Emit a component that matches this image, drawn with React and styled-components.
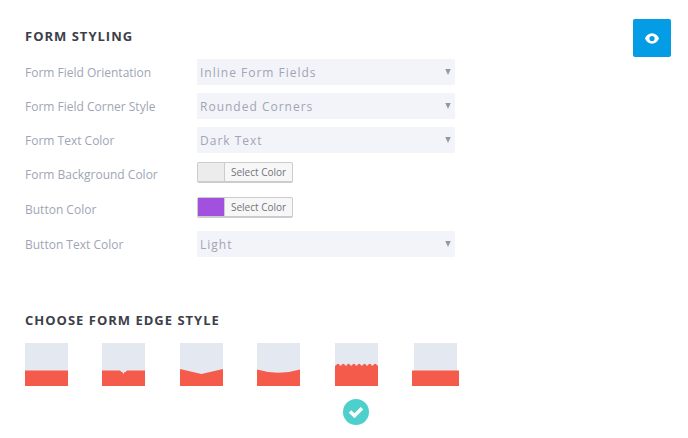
import React, { useState } from "react";
import styled, { createGlobalStyle } from "styled-components";

const GlobalStyle = createGlobalStyle`
  * {
    box-sizing: border-box;
  }

  body {
    margin: 0;
    background: #fff;
    font-family: "Open Sans", "Noto Sans", sans-serif;
  }
`;

const FIELDS = [
  {
    id: "orientation",
    label: "Form Field Orientation",
    options: ["Inline Form Fields", "Stacked Form Fields"],
  },
  {
    id: "corners",
    label: "Form Field Corner Style",
    options: ["Rounded Corners", "Square Corners"],
  },
  {
    id: "text-color",
    label: "Form Text Color",
    options: ["Dark Text", "Light Text"],
  },
  { id: "background", label: "Form Background Color", color: "#ececec" },
  { id: "button-color", label: "Button Color", color: "#a250de" },
  {
    id: "button-text",
    label: "Button Text Color",
    options: ["Light", "Dark"],
  },
];

// "shape" is the red lower part, drawn over a 43px tile
const EDGES = [
  { id: "straight", shape: "M0 27.5H43V43H0Z" },
  {
    id: "notch",
    shape: "M0 27.5H18L19.5 29L20.5 29.3L21.5 31L22.5 29.3L23.5 29L25 27.5H43V43H0Z",
  },
  { id: "angle", shape: "M0 26L21.5 31L43 26V43H0Z" },
  { id: "curve", shape: "M0 26.5Q21.5 33 43 26.5V43H0Z" },
  {
    id: "zigzag",
    shape:
      "M0 23L2 21.3Q3 20 4 21.3L5.5 23L7.3 21.3Q8.3 20 9.3 21.3L10.8 23L12.6 21.3Q13.6 20 14.6 21.3L16.1 23L17.9 21.3Q18.9 20 19.9 21.3L21.4 23L23.2 21.3Q24.2 20 25.2 21.3L26.7 23L28.5 21.3Q29.5 20 30.5 21.3L32 23L33.8 21.3Q34.8 20 35.8 21.3L37.3 23L39.1 21.3Q40.1 20 41.1 21.3L43 23V43H0Z",
  },
  { id: "overhang", shape: "M0 27.5H47V43H0Z", wide: true },
];

const App = () => {
  const [edge, setEdge] = useState("zigzag");

  return (
    <>
      <GlobalStyle />
      <Page>
        <Settings>
          <Section>
            <Title>Form Styling</Title>
            <Fields>
              {FIELDS.map((field) =>
                field.color ? (
                  <Row key={field.id} $tall>
                    <Label htmlFor={field.id}>{field.label}</Label>
                    <ColorButton id={field.id} type="button">
                      <Swatch $color={field.color} />
                      <ColorText>Select Color</ColorText>
                    </ColorButton>
                  </Row>
                ) : (
                  <Row key={field.id}>
                    <Label htmlFor={field.id}>{field.label}</Label>
                    <SelectBox>
                      <Select id={field.id}>
                        {field.options.map((option) => (
                          <option key={option}>{option}</option>
                        ))}
                      </Select>
                      <Arrow viewBox="0 0 6 6" aria-hidden="true">
                        <path d="M0.3 0H5.7L3 6Z" />
                      </Arrow>
                    </SelectBox>
                  </Row>
                )
              )}
            </Fields>
          </Section>

          <Section>
            <Title>Choose Form Edge Style</Title>
            <Edges role="radiogroup" aria-label="Form edge style">
              {EDGES.map(({ id, shape, wide }) => (
                <Edge key={id}>
                  <EdgeInput
                    type="radio"
                    name="edge"
                    value={id}
                    aria-label={id}
                    checked={edge === id}
                    onChange={() => setEdge(id)}
                  />
                  <Tile $wide={wide} viewBox={wide ? "0 0 47 43" : "0 0 43 43"}>
                    <rect x={wide ? 2 : 0} width="43" height="42" fill="#e4e8f1" />
                    <path d={shape} fill="#f45b4b" />
                  </Tile>
                  {edge === id && (
                    <Check viewBox="0 0 26 26">
                      <circle cx="13" cy="13" r="13" fill="#4dd0cb" />
                      <path
                        d="M7 12.5L11.5 16.7L19 9.3"
                        fill="none"
                        stroke="#fff"
                        strokeWidth="3.6"
                      />
                    </Check>
                  )}
                </Edge>
              ))}
            </Edges>
          </Section>
        </Settings>

        <PreviewButton type="button" aria-label="Preview">
          <svg width="14" height="11" viewBox="0 0 14 11">
            <path
              fill="#fff"
              fillRule="evenodd"
              d="M7 0.3C3.8 0.3 1.2 2.4 0 5.5C1.2 8.6 3.8 10.7 7 10.7S12.8 8.6 14 5.5C12.8 2.4 10.2 0.3 7 0.3ZM7 8.1A2.6 2.6 0 1 1 7 2.9A2.6 2.6 0 0 1 7 8.1Z"
            />
          </svg>
        </PreviewButton>
      </Page>
    </>
  );
};

const Page = styled.main`
  display: flex;
  justify-content: space-between;
  align-items: flex-start;
  gap: 24px;
  padding: 19px 17px 13px 25px;
`;

const Settings = styled.form`
  display: flex;
  flex-direction: column;
  gap: 51px;
  flex: 1;
  max-width: 434px;
  padding-top: 7px;
`;

const Section = styled.section`
  display: flex;
  flex-direction: column;
  gap: 13px;
`;

const Title = styled.h2`
  margin: 0;
  font-size: 13px;
  line-height: 20px;
  font-weight: 700;
  letter-spacing: 1px;
  text-transform: uppercase;
  color: #3c3f4a;
`;

const Fields = styled.div`
  display: flex;
  flex-direction: column;
  gap: 6px;
  padding-right: 4px;
`;

const Row = styled.div`
  display: grid;
  grid-template-columns: 172px 1fr;
  align-items: start;
  min-height: ${(props) => (props.$tall ? 29 : 28)}px;
`;

const Label = styled.label`
  font-size: 12px;
  line-height: 28px;
  color: #a0a5b5;
`;

const SelectBox = styled.div`
  position: relative;
`;

const Select = styled.select`
  appearance: none;
  display: block;
  width: 100%;
  height: 26px;
  padding: 0 20px 0 3px;
  border: 0;
  border-radius: 1px;
  background: #f3f4f9;
  font-family: inherit;
  font-size: 12px;
  letter-spacing: 1px;
  color: #a0a5b5;
`;

const Arrow = styled.svg`
  position: absolute;
  top: 10px;
  right: 4px;
  width: 6px;
  height: 6px;
  fill: #8f97a9;
  pointer-events: none;
`;

const ColorButton = styled.button`
  display: flex;
  justify-self: start;
  height: 21px;
  margin-top: 1px;
  padding: 0;
  border: 1px solid #ccc;
  border-bottom-width: 2px;
  border-radius: 2px;
  background: #f7f7f7;
  font-family: inherit;
  cursor: pointer;
`;

const Swatch = styled.span`
  align-self: stretch;
  width: 26px;
  background: ${(props) => props.$color};
`;

const ColorText = styled.span`
  padding: 0 6px;
  border-left: 1px solid #ccc;
  font-size: 10px;
  line-height: 18px;
  color: #70747c;
`;

const Edges = styled.div`
  display: flex;
  justify-content: space-between;
  align-items: flex-start;
`;

const Edge = styled.label`
  position: relative;
  display: flex;
  flex-direction: column;
  align-items: center;
  gap: 13px;
  cursor: pointer;
`;

const EdgeInput = styled.input`
  position: absolute;
  inset: 0;
  margin: 0;
  opacity: 0;
`;

const Tile = styled.svg`
  width: ${(props) => (props.$wide ? 47 : 43)}px;
  height: 43px;
`;

const Check = styled.svg`
  width: 26px;
  height: 26px;
`;

const PreviewButton = styled.button`
  display: flex;
  justify-content: center;
  align-items: center;
  width: 38px;
  height: 38px;
  padding: 0;
  border: 0;
  border-radius: 2px;
  background: #049ce5;
  cursor: pointer;
`;

export default App;
